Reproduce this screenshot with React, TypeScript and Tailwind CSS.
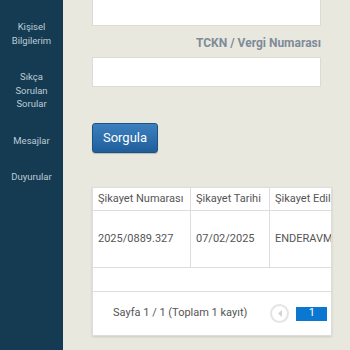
const menu = [
  { lines: ["Kişisel", "Bilgilerim"], mt: "mt-[20px]" },
  { lines: ["Sıkça", "Sorulan", "Sorular"], mt: "mt-[23px]" },
  { lines: ["Mesajlar"], mt: "mt-[23px]" },
  { lines: ["Duyurular"], mt: "mt-[23px]" },
];

function Sidebar() {
  return (
    <div className="flex flex-col items-center w-[63px] shrink-0 h-[350px] bg-[#153b52] text-[#bccbd6] text-[9.5px] leading-[13.5px] text-center">
      {menu.map((m, i) => (
        <div key={i} className={m.mt}>
          {m.lines.map((l) => (
            <div key={l}>{l}</div>
          ))}
        </div>
      ))}
    </div>
  );
}

function App() {
  return (
    <div
      className="flex w-[350px] h-[350px] overflow-hidden bg-[#e9e8df]"
      style={{ fontFamily: "Roboto, 'Liberation Sans', sans-serif" }}
    >
      <Sidebar />
      <div className="flex flex-col flex-1 min-w-0 pl-[29px] pr-[29px]">
        <div className="mt-[-4px] h-[30px] bg-white border border-[#dcdcd4]" />
        <div className="mt-[10px] h-[14px] text-right text-[12px] leading-[14px] font-bold text-[#7e8b98] whitespace-nowrap">
          TCKN / Vergi Numarası
        </div>
        <div className="mt-[7px] h-[30px] bg-white border border-[#dcdcd4]" />
        <button className="mt-[36px] w-[66px] h-[30px] rounded-[3px] border border-[#1d5286] bg-gradient-to-b from-[#3d80bf] to-[#1f5e9b] text-white text-[13px] shadow-[0_1px_1px_rgba(0,0,0,0.2)]">
          Sorgula
        </button>
        <div className="mt-[34px] w-[240px] shrink-0 overflow-hidden bg-white border border-[#dddddd] shadow-[0_1px_2px_rgba(0,0,0,0.12)] text-[11px] text-[#555]">
          <div className="flex w-[340px] h-[23px] border-b border-[#dddddd]">
            <div className="w-[98px] shrink-0 border-r border-[#dddddd] px-[5px] flex items-center whitespace-nowrap">
              Şikayet Numarası
            </div>
            <div className="w-[79px] shrink-0 border-r border-[#dddddd] px-[5px] flex items-center whitespace-nowrap">
              Şikayet Tarihi
            </div>
            <div className="flex-1 px-[5px] flex items-center whitespace-nowrap">
              Şikayet Edilen Firma
            </div>
          </div>
          <div className="flex w-[340px] h-[57px] border-b border-[#dddddd]">
            <div className="w-[98px] shrink-0 border-r border-[#dddddd] px-[5px] flex items-center whitespace-nowrap">
              2025/0889.327
            </div>
            <div className="w-[79px] shrink-0 border-r border-[#dddddd] px-[5px] flex items-center whitespace-nowrap">
              07/02/2025
            </div>
            <div className="flex-1 px-[5px] flex items-center whitespace-nowrap">
              ENDERAVM A.Ş.
            </div>
          </div>
          <div className="h-[24px] border-b border-[#dddddd]" />
          <div className="flex items-center h-[43px] pl-[20px]">
            <span className="whitespace-nowrap">Sayfa 1 / 1 (Toplam 1 kayıt)</span>
            <div className="ml-[23px] w-[19px] h-[19px] shrink-0 rounded-full border-2 border-[#e4e4e4] flex items-center justify-center">
              <svg width="6" height="7" viewBox="0 0 6 7">
                <polygon points="5,0 5,7 1,3.5" fill="#d3d3d3" />
              </svg>
            </div>
            <div className="ml-[7px] w-[31px] h-[14px] shrink-0 bg-[#0c77d1] text-white text-[11px] flex items-center justify-center">
              1
            </div>
          </div>
        </div>
      </div>
    </div>
  );
}

export default App;
